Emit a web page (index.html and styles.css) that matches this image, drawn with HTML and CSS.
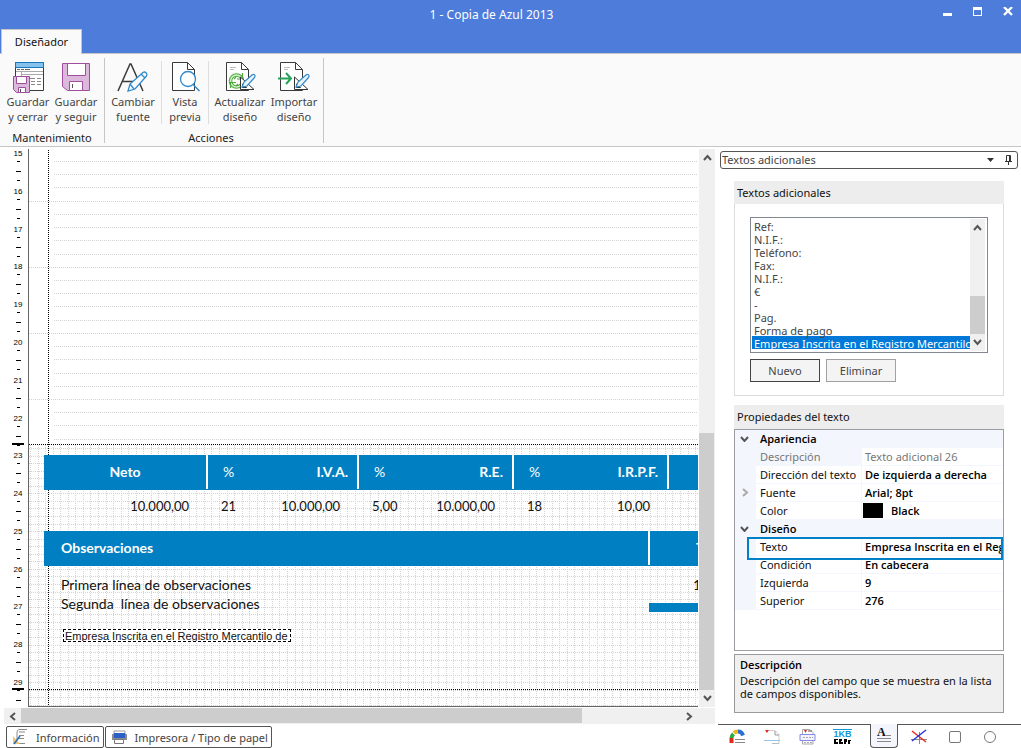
FILE: index.html
```html
<!DOCTYPE html>
<html lang="es">
<head>
<meta charset="utf-8">
<title>1 - Copia de Azul 2013</title>
<link rel="stylesheet" href="styles.css">
</head>
<body>
<header class="titlebar">
  <div class="title-row">
    <h1 class="title">1 - Copia de Azul 2013</h1>
    <div class="window-buttons">
      <button type="button" aria-label="Minimizar"><svg width="10" height="10"><rect y="6" width="9" height="3" fill="#fff"/></svg></button>
      <button type="button" aria-label="Maximizar"><svg width="10" height="10"><path d="M0 0h9v9H0zM1 3v5h7V3z" fill="#fff" fill-rule="evenodd"/></svg></button>
      <button type="button" aria-label="Cerrar"><svg width="10" height="10" viewBox="0 0 10 10"><path d="M1 0l8 8M9 0l-8 8" stroke="#fff" stroke-width="2.4"/></svg></button>
    </div>
  </div>
  <nav class="tabs"><button type="button" class="tab">Diseñador</button></nav>
</header>

<section class="ribbon">
  <div class="group">
    <div class="tools">
      <button type="button" class="tool">
        <svg width="32" height="32" viewBox="0 0 32 32"><path d="M3.500 1.500h28v28h-28z" fill="#fff" stroke="#3a3a3a"/><path d="M3.500 1.500h28v5h-28z" fill="#86c3ec" stroke="#1478be"/><path d="M5 8.500h3M9 8.500h3M13 8.500h5" stroke="#666"/><path d="M4 10.500h27M9.500 11v4M9 13.500h22" stroke="#aaa"/><path d="M17 17.500h6M25 17.500h4M19 20.500h4M25 20.500h4M19 23.500h4M25 23.500h4" stroke="#888"/><path d="M1.500 15.500h16v16h-13l-3-3z" fill="#dcb8dd" stroke="#9d4f9d"/><path d="M4.500 15.500h10v7h-10zM6.500 26.500h7v5h-7z" fill="#fff" stroke="#9d4f9d"/><path d="M8.500 28v3" stroke="#555"/></svg>
        <span>Guardar<br>y cerrar</span></button>
      <button type="button" class="tool">
        <svg width="32" height="32" viewBox="0 0 32 32"><path d="M2.500 2.500h27v27H7.500l-5-4z" fill="#dcb8dd" stroke="#9d4f9d"/><path d="M7.500 2.500h18v12h-18zM9.500 20.500h13v9h-13z" fill="#fff" stroke="#9d4f9d"/><path d="M12.500 23v4" stroke="#555"/></svg>
        <span>Guardar<br>y seguir</span></button>
    </div>
    <div class="group-name">Mantenimiento</div>
  </div>
  <div class="group">
    <div class="tools">
      <button type="button" class="tool">
        <svg width="32" height="32" viewBox="0 0 32 32"><path d="M1 30L13 3h1l12 27M6 20.500h16" fill="none" stroke="#3a3a3a" stroke-width="1.500"/><path d="M11 30l2-7L26 11.500c2-1.500 5 1 3.500 3.500L18 28zM13 23l4 5M24 13l4 4" fill="#f8fbfe" stroke="#3289cc" stroke-width="1.300"/></svg>
        <span>Cambiar<br>fuente</span></button>
      <button type="button" class="tool divided">
        <svg width="32" height="32" viewBox="0 0 32 32"><path d="M3.500 1.500h15l7 7v21h-22z" fill="#fff" stroke="#3a3a3a"/><path d="M18.500 1.500v7h7" fill="none" stroke="#3a3a3a"/><circle cx="19" cy="18" r="7.500" fill="#fff" stroke="#3289cc" stroke-width="1.300"/><path d="M24.500 24l6 6" stroke="#3289cc" stroke-width="1.500"/></svg>
        <span>Vista<br>previa</span></button>
      <button type="button" class="tool wide divided">
        <svg width="32" height="32" viewBox="0 0 32 32"><path d="M2.500 1.500h15l7 7v21h-22z" fill="#fff" stroke="#3a3a3a"/><path d="M17.500 1.500v7h7" fill="none" stroke="#3a3a3a"/><path d="M6 6.500h6M6 8.500h4" stroke="#bbb"/><circle cx="12.500" cy="20" r="6" fill="none" stroke="#4cab3b" stroke-width="3.600"/><circle cx="12.500" cy="20" r="6" fill="none" stroke="#d3efcc" stroke-width="1.600"/><path d="M18.500 12v6h-5.500M6.500 27v-5.500h5.500M10 18l2-2M14 23l-2 2" fill="none" stroke="#4cab3b" stroke-width="1.200"/><path d="M16.500 16v12.500h13.500z" fill="#fff" stroke="#333"/><path d="M18.500 23v3.500h4z" fill="#fff" stroke="#333"/><path d="M18 26l2-5 8-7c2-1.500 4 .5 2.500 2.500L23 25z" fill="#e8f4fc" stroke="#3289cc" stroke-width="1.200"/></svg>
        <span>Actualizar<br>diseño</span></button>
      <button type="button" class="tool wide last">
        <svg width="32" height="32" viewBox="0 0 32 32"><path d="M2.500 1.500h15l7 7v21h-22z" fill="#fff" stroke="#3a3a3a"/><path d="M17.500 1.500v7h7" fill="none" stroke="#3a3a3a"/><path d="M6 6.500h6M6 8.500h4" stroke="#bbb"/><path d="M0 17.500h13M8 12l5 5.500-5 5.500" fill="none" stroke="#27a35b" stroke-width="2"/><path d="M16.500 16v12.500h13.500z" fill="#fff" stroke="#333"/><path d="M18.500 23v3.500h4z" fill="#fff" stroke="#333"/><path d="M18 26l2-5 8-7c2-1.500 4 .5 2.500 2.500L23 25z" fill="#e8f4fc" stroke="#3289cc" stroke-width="1.200"/></svg>
        <span>Importar<br>diseño</span></button>
    </div>
    <div class="group-name">Acciones</div>
  </div>
</section>

<main class="workspace">
  <section class="designer">
    <div class="stage">
      <svg class="ruler" id="ruler"></svg>
      <div class="canvas">
        <svg class="grid" id="grid"></svg>
        <div class="band totals-head">
          <div class="cell net"><b>Neto</b></div>
          <div class="cell vat"><span>%</span><b>I.V.A.</b></div>
          <div class="cell"><span>%</span><b>R.E.</b></div>
          <div class="cell"><span>%</span><b>I.R.P.F.</b></div>
        </div>
        <div class="band-values">
          <div class="value net">10.000,00</div>
          <div class="value vat"><span>21</span><span>10.000,00</span></div>
          <div class="value"><span>5,00</span><span>10.000,00</span></div>
          <div class="value"><span>18</span><span>10,00</span></div>
        </div>
        <div class="band notes-head"><div class="cell notes"><b>Observaciones</b></div><b class="total">T</b></div>
        <div class="note note-1">Primera línea de observaciones</div>
        <div class="note note-2">Segunda&nbsp; línea de observaciones</div>
        <div class="note amount">1</div>
        <div class="strip"></div>
        <div class="selected-text">Empresa Inscrita en el Registro Mercantilo de</div>
      </div>
      <div class="vscroll">
        <button type="button" aria-label="Subir"><svg width="9" height="7"><path d="M1 6l3.500-4L8 6" class="chev"/></svg></button>
        <div class="vthumb"></div>
        <button type="button" aria-label="Bajar"><svg width="9" height="7"><path d="M1 1l3.500 4L8 1" class="chev"/></svg></button>
      </div>
    </div>
    <div class="hscroll">
      <button type="button" aria-label="Izquierda"><svg width="7" height="9"><path d="M6 1L2 4.500 6 8" class="chev"/></svg></button>
      <div class="htrack"><div class="hthumb"></div></div>
      <button type="button" aria-label="Derecha"><svg width="7" height="9"><path d="M1 1l4 3.500L1 8" class="chev"/></svg></button>
    </div>
    <footer class="dock">
      <button type="button" class="dock-button">
        <svg width="17" height="18" viewBox="0 0 17 18"><path d="M5 12V5c0-3 1-3.500 3-3.500h7M7 4h6M7 7.500h5M7 10.500h5M6 15.500h7" fill="none" stroke="#8a8a8a"/><path d="M1 8v8h7z" fill="#f3c274"/><path d="M2 16l6-8" stroke="#2a6fb8" stroke-width="1.600"/></svg>
        Información</button>
      <button type="button" class="dock-button">
        <svg width="17" height="16" viewBox="0 0 17 16"><path d="M3 5V2h11v3" fill="#fff" stroke="#999"/><path d="M1 5h15v6H1z" fill="#888b90"/><path d="M3 4h11v5H3z" fill="#2d5fc9"/><path d="M3.500 10.500h9v4h-9z" fill="#fff" stroke="#777"/></svg>
        Impresora / Tipo de papel</button>
    </footer>
  </section>

  <aside class="side">
    <div class="picker">
      <select aria-label="Panel"><option>Textos adicionales</option></select>
      <svg class="caret" width="7" height="4"><path d="M0 0h7L3.500 4z" fill="#333"/></svg>
      <button type="button" aria-label="Anclar"><svg width="9" height="10" viewBox="0 0 9 10"><path d="M2.500 6V.5h4V6M1 6.500h7M4.500 7v3M5.500 1v5" fill="none" stroke="#333"/></svg></button>
    </div>
    <div class="panels">
      <section class="panel">
        <h2 id="texts">Textos adicionales</h2>
        <div class="panel-body">
          <div class="listbox">
            <select size="10" aria-labelledby="texts">
              <option>Ref:</option><option>N.I.F.:</option><option>Teléfono:</option><option>Fax:</option><option>N.I.F.:</option><option>€</option><option>-</option><option>Pag.</option><option>Forma de pago</option><option selected>Empresa Inscrita en el Registro Mercantilo</option>
            </select>
            <div class="list-scroll">
              <button type="button" aria-label="Subir lista"><svg width="9" height="7"><path d="M1 6l3.500-4L8 6" class="chev"/></svg></button>
              <div class="list-thumb"></div>
              <button type="button" aria-label="Bajar lista"><svg width="9" height="7"><path d="M1 1l3.500 4L8 1" class="chev"/></svg></button>
            </div>
          </div>
          <div class="actions"><button type="button" class="primary">Nuevo</button><button type="button">Eliminar</button></div>
        </div>
      </section>
      <section class="panel-props">
        <h2>Propiedades del texto</h2>
        <div class="props">
          <table>
            <colgroup><col class="col-toggle"><col class="col-name"><col></colgroup>
            <tbody>
            <tr class="category"><td><svg width="9" height="6"><path d="M1 1l3.500 4L8 1" class="chev"/></svg></td><th colspan="2">Apariencia</th></tr>
            <tr class="readonly"><td></td><th>Descripción</th><td>Texto adicional 26</td></tr>
            <tr><td></td><th>Dirección del texto</th><td>De izquierda a derecha</td></tr>
            <tr><td><svg width="9" height="9"><path d="M3 1l4 3.500L3 8" class="chev pale"/></svg></td><th>Fuente</th><td>Arial; 8pt</td></tr>
            <tr><td></td><th>Color</th><td class="color"><i class="swatch"></i>Black</td></tr>
            <tr class="category"><td><svg width="9" height="6"><path d="M1 1l3.500 4L8 1" class="chev"/></svg></td><th colspan="2">Diseño</th></tr>
            <tr class="current"><td></td><th>Texto</th><td>Empresa Inscrita en el Regi</td></tr>
            <tr><td></td><th>Condición</th><td>En cabecera</td></tr>
            <tr><td></td><th>Izquierda</th><td>9</td></tr>
            <tr><td></td><th>Superior</th><td>276</td></tr>
            </tbody>
          </table>
        </div>
        <div class="help"><b>Descripción</b><p>Descripción del campo que se muestra en la lista de campos disponibles.</p></div>
      </section>
    </div>
    <nav class="side-tabs">
      <button type="button" aria-label="Campos"><svg width="17" height="16" viewBox="0 0 17 16"><path d="M2.500 14V9" stroke="#e02a1c" stroke-width="4"/><path d="M2.500 9c0-2 1-3 2-4" stroke="#2fa83c" stroke-width="4" fill="none"/><path d="M5 4c1-1 2-1.500 4-1.500" stroke="#f3b60f" stroke-width="4" fill="none"/><path d="M9 2.500c3 0 4 1 5 4" stroke="#2a6fd0" stroke-width="4" fill="none"/><path d="M6 10.500h10M6 13.500h10" stroke="#888"/></svg></button>
      <button type="button" aria-label="Cabecera"><svg width="17" height="16" viewBox="0 0 17 16"><path d="M5 1.500h6l4 4v9" fill="none" stroke="#ccc"/><path d="M1 1h4L3 4z" fill="#e02a1c"/><path d="M11 2v4h4" fill="none" stroke="#999"/><path d="M0 11.500h16" stroke="#8fc7e8"/><path d="M8 14.500h7" stroke="#bbb"/></svg></button>
      <button type="button" aria-label="Líneas"><svg width="17" height="16" viewBox="0 0 17 16"><path d="M3.500 15V.5H11l3 3V15z" fill="#fff" stroke="#aaa"/><path d="M5 1h3L6.500 4z" fill="#e02a1c"/><path d="M9 2h4" stroke="#555"/><path d="M1 5.500h15v6H1z" fill="#f2f2ff" stroke="#8589e8"/><path d="M4 8.500h10M5 13.500h8" stroke="#aaa" stroke-dasharray="2 1"/></svg></button>
      <button type="button" aria-label="Imágenes" class="binary"><span>1KB</span><svg width="17" height="5"><path d="M0 0h4v1H2v2h2v2H0zM5 0h3v2H7v1h2v2H5zM10 0h3v3h-1v2h-2zM14 1h3v1h-1v3h-2z" fill="#000"/></svg></button>
      <button type="button" aria-label="Textos" class="active"><svg width="17" height="17" viewBox="0 0 17 17"><text x="1" y="9" font-family="Liberation Serif, serif" font-weight="700" font-size="12" fill="#111">A</text><path d="M10 8.500h5M1 11.500h14M1 14.500h14" stroke="#888"/></svg></button>
      <button type="button" aria-label="Rayas"><svg width="17" height="16" viewBox="0 0 17 16"><path d="M0 10.500h16M8.500 3v12" stroke="#888"/><path d="M1 2l14 11" stroke="#e8261c" stroke-width="1.400"/><path d="M1 12L15 1" stroke="#2433dc" stroke-width="1.400"/></svg></button>
      <button type="button" aria-label="Rectángulos"><svg width="14" height="14"><rect x="1.500" y="1.500" width="11" height="11" rx="1.500" fill="#fff" stroke="#777"/></svg></button>
      <button type="button" aria-label="Círculos"><svg width="14" height="14"><circle cx="7" cy="7" r="5.500" fill="#fff" stroke="#777"/></svg></button>
    </nav>
  </aside>
</main>
<script src="designer.js"></script>
</body>
</html>
```

FILE: styles.css
```css
* { box-sizing: border-box; }
body { margin: 0; min-height: 100vh; display: flex; flex-direction: column; background: #fff; color: #444; font: 11px/15px "Noto Sans", "Open Sans", sans-serif; }
button, select { font: inherit; color: inherit; margin: 0; padding: 0; border: 0; background: none; }
svg { display: block; }
h1, h2, p { margin: 0; font: inherit; }
.chev { fill: none; stroke: #555; stroke-width: 2; }
.chev.pale { stroke: #aaa; }

.titlebar { background: #4d7cdb; border-bottom: 1px solid #c6c6c6; height: 54px; display: flex; flex-direction: column; justify-content: space-between; }
.title-row { display: flex; height: 29px; }
.title { flex: 1; padding-left: 40px; font-size: 12px; line-height: 29px; text-align: center; color: #fff; }
.window-buttons { display: flex; gap: 20px; padding: 7px 8px 0 0; align-items: flex-start; }
.tabs { display: flex; padding-left: 1px; margin-bottom: -1px; }
.tab { width: 81px; height: 25px; padding-bottom: 1px; background: #fafafa; color: #111; border: 1px solid #c6c6c6; border-bottom: 0; }

.ribbon { display: flex; background: #fafafa; border-bottom: 1px solid #c6c6c6; padding-top: 4px; height: 93px; }
.group { border-right: 1px solid #c6c6c6; height: 85px; display: flex; flex-direction: column; }
.tools { display: flex; flex: none; height: 72px; padding-top: 3px; }
.tool { width: 48px; display: flex; flex-direction: column; align-items: center; }
.tool svg { flex: none; }
.tool span { white-space: nowrap; margin-top: 1px; }
.group:first-child { width: 105px; }
.group:first-child .tools { padding-left: 4px; }
.group + .group { padding-right: 6px; }
.group + .group .tool { width: 57px; border-right: 1px solid #dedede; height: 63px; }
.group + .group .tool.divided { width: 47px; }
.group + .group .tool.wide { width: 62px; border: 0; }
.group + .group .tool.last { width: 46px; }
.group-name { text-align: center; color: #222; line-height: 16px; }

.workspace { flex: 1; display: flex; }
.designer { flex: 1; min-width: 0; display: flex; flex-direction: column; }
.stage { flex: 1; display: flex; padding-top: 2px; margin-bottom: 1px; }
.ruler { width: 28px; height: auto; flex: none; }
.canvas { position: relative; flex: 1; overflow: hidden; margin-right: 1px; border-left: 1px solid #646464; border-bottom: 1px solid #646464; font-family: Lato, sans-serif; font-size: 14px; color: #111; white-space: nowrap; }
.grid { position: absolute; left: 0; top: 0; width: 100%; height: 100%; }
.band { position: absolute; left: 15px; right: 0; height: 35px; display: flex; background: #0080c2; color: #fff; padding-bottom: 1px; }
.totals-head { top: 306px; }
.notes-head { top: 382px; }
.cell { width: 155px; flex: none; display: flex; align-items: center; justify-content: space-between; border-right: 2px solid #fff; padding: 0 9px 2px 15px; }
.cell.net { width: 164px; justify-content: center; padding: 0 0 2px; }
.cell.vat, .value.vat { width: 151px; }
.cell.notes { width: 606px; padding-left: 17px; }
.total { padding-left: 46px; line-height: 34px; }
.band-values { position: absolute; left: 15px; right: 0; top: 347px; display: flex; font-size: 13px; line-height: 20px; }
.value { width: 155px; flex: none; display: flex; justify-content: space-between; padding: 0 19px 0 13px; }
.value.net { width: 164px; justify-content: flex-end; }
.note { position: absolute; left: 32px; line-height: 20px; }
.note-1 { top: 426px; }
.note-2 { top: 445px; }
.amount { top: 426px; left: 664px; }
.strip { position: absolute; left: 620px; right: 0; top: 454px; height: 9px; background: #0080c2; }
.selected-text { position: absolute; left: 34px; top: 480px; width: 228px; height: 13px; border: 1px dashed #000; padding-left: 1px; background: #fff; font: 11px/12px "Liberation Sans", sans-serif; overflow: hidden; }

.vscroll { width: 16px; background: #f0f0f0; display: flex; flex-direction: column; }
.vscroll button { height: 17px; display: grid; place-items: center; }
.vthumb { flex: none; height: 46%; margin: auto 1px 0 0; background: #cdcdcd; }
.hscroll { height: 16px; margin-left: 4px; background: #f0f0f0; display: flex; padding-right: 17px; }
.hscroll button { width: 17px; display: grid; place-items: center; }
.htrack { flex: 1; }
.hthumb { width: 85%; height: 15px; background: #cdcdcd; }
.dock { display: flex; gap: 1px; padding: 2px 6px 0; height: 24px; }
.dock-button { height: 22px; border: 1px solid #555; border-radius: 2px; display: flex; align-items: center; gap: 7px; padding: 0 3px 0 5px; background: #fff; }

.side { width: 306px; flex: none; display: flex; flex-direction: column; color: #444; }
.picker { display: flex; align-items: center; margin: 4px 3px 0 5px; height: 18px; border: 1px solid #555; border-radius: 3px; padding: 0 4px 0 1px; }
.picker select { flex: 1; appearance: none; height: 16px; line-height: 16px; }
.caret { margin-right: 10px; }
.panels { flex: 1; padding: 12px 17px 0 19px; }
.panel { border: 1px solid #dcdcdc; border-top: 0; height: 215px; }
.panel h2, .panel-props h2 { background: #ededed; color: #111; height: 23px; line-height: 23px; padding-left: 3px; }
.panel h2 { margin: 0 -1px; }
.panel-body { padding: 13px 15px 0; }
.listbox { display: flex; border: 1px solid #828790; height: 136px; padding: 1px 2px 1px 1px; }
.listbox select { flex: 1; min-width: 0; overflow: hidden; border: 0; border-radius: 0; outline: 0; color: #444; scrollbar-width: none; }
.listbox option { font: 11px/11px "Noto Sans", sans-serif; height: 13px; min-height: 13px; padding: 0 0 2px 2px; color: #444; }
.listbox option:checked { background: #0078d7 linear-gradient(#0078d7, #0078d7); color: #fff; }
.list-scroll { width: 15px; background: #f0f0f0; display: flex; flex-direction: column; }
.list-scroll button { height: 17px; display: grid; place-items: center; }
.list-thumb { height: 38px; margin-top: auto; background: #cdcdcd; }
.actions { display: flex; gap: 6px; margin-top: 6px; }
.actions button { width: 70px; height: 23px; border: 1px solid #a0a0a0; background: #f4f4f4; }
.actions .primary { border-color: #444; }
.panel-props { margin-top: 9px; }
.panel-props h2 { height: 24px; line-height: 24px; }
.props { height: 222px; border: 1px solid #9a9da2; overflow: hidden; }
.props table { width: 100%; border-collapse: separate; border-spacing: 0; table-layout: fixed; color: #111; }
.col-toggle { width: 21px; }
.col-name { width: 105px; }
.props tr { height: 18px; }
.props td, .props th { height: 18px; padding: 0 0 0 4px; line-height: 17px; text-align: left; font-weight: 400; white-space: nowrap; overflow: visible; border-bottom: 1px solid #f3f6fc; }
.props td:first-child { background: #f3f6fc; padding-left: 5px; }
.props td:last-child { font-family: "Open Sans", "Noto Sans", sans-serif; font-weight: 600; color: #000; border-left: 1px solid #f3f6fc; padding-left: 3px; }
.props .category th { background: #f3f6fc; color: #000; font-family: "Open Sans", "Noto Sans", sans-serif; font-weight: 600; }
.props .readonly th, .props .readonly td:last-child { color: #777; font-family: inherit; font-weight: 400; }
.props .readonly th { background: #f3f6fc; }
.props td.color:last-child { padding-left: 1px; }
.swatch { display: inline-block; width: 20px; height: 15px; background: #000; margin-right: 8px; vertical-align: top; margin-top: 1px; }
.current td:last-child { position: relative; }
.current td:last-child::after { content: ""; box-sizing: border-box; position: absolute; left: -115px; right: 0; top: -1px; height: 23px; border: 2px solid #0080c6; }
.help { margin-top: 3px; height: 59px; border: 1px solid #9a9a9a; background: #f0f0f0; color: #111; padding: 2px 5px; line-height: 13px; }
.help b { display: block; line-height: 15px; margin-bottom: 2px; font-family: "Open Sans", "Noto Sans", sans-serif; font-weight: 600; color: #000; }
.side-tabs { display: flex; height: 24px; margin-left: 3px; border-top: 1px solid #555; padding-left: 2px; }
.side-tabs button { width: 35px; height: 23px; display: flex; flex-direction: column; align-items: center; justify-content: center; }
.side-tabs .active { width: 28px; height: 24px; margin: -1px 4px 0 10px; border: 1px solid #555; border-top: 0; border-radius: 0 0 4px 4px; background: #f5f6fd; }
.binary span { font: 700 9px/9px "Liberation Sans", sans-serif; color: #1597d6; border-top: 1px solid #1597d6; }
```

FILE: designer.js
```js
const NS = "http://www.w3.org/2000/svg";
const CM = 37.79;

function add(svg, name, attrs, text) {
  const el = document.createElementNS(NS, name);
  for (const key in attrs) el.setAttribute(key, attrs[key]);
  if (text) el.textContent = text;
  svg.append(el);
}

// Ruler: a number per centimetre with three quarter marks between.
const ruler = document.getElementById("ruler");
for (let cm = 15; cm <= 29; cm++) {
  const y = (cm - 15) * CM + 4;
  add(ruler, "text", { x: 18, y: Math.round(y) + 3, "text-anchor": "middle", "font-family": "Liberation Sans, sans-serif", "font-size": 8, fill: "#000" }, String(cm));
  [[8, 3], [18, 5], [27, 3]].forEach(([offset, width]) => {
    add(ruler, "rect", { x: width === 5 ? 16 : 17, y: Math.round(y + offset), width, height: 1, fill: "#000" });
  });
}
[294, 539].forEach(y => add(ruler, "rect", { x: 12, y, width: 12, height: 2, fill: "#000" }));

// Canvas: dotted detail lines above the footer section, snap grid inside it.
const grid = document.getElementById("grid");
const FOOTER = 295;
function across(x, y, color) {
  add(grid, "line", { x1: x, x2: "100%", y1: y + 0.5, y2: y + 0.5, stroke: color, "stroke-dasharray": "1 1" });
}
function down(x, y, color) {
  add(grid, "line", { x1: x + 0.5, x2: x + 0.5, y1: y, y2: "100%", stroke: color, "stroke-dasharray": "1 1" });
}
for (let i = 0; i < 22; i++) across(i % 5 === 3 ? 0 : 25, Math.round(12 + i * 13.22), "#d2d2d2");
for (let i = 0; i < 35; i++) across(0, Math.round(299 + i * CM / 5), "#d4d4d4");
for (let i = 0; i < 260; i++) down(Math.round(1 + i * CM / 5), FOOTER + 1, "#d4d4d4");
down(19, 1, "#000");
across(0, FOOTER, "#000");
across(0, 540, "#000");
```
